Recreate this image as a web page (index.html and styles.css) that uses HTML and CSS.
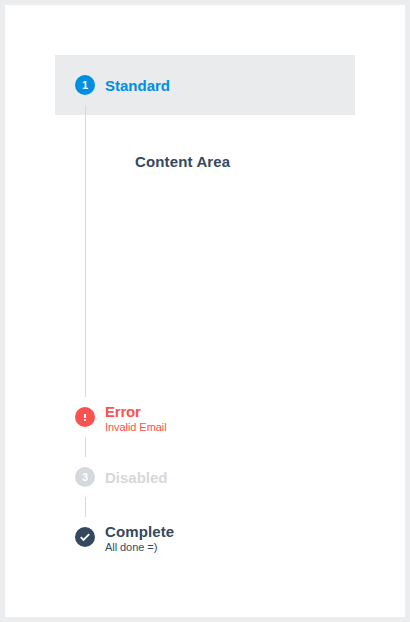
FILE: index.html
```html
<!DOCTYPE html>
<html lang="en">
<head>
<meta charset="utf-8">
<title>Stepper</title>
<link rel="stylesheet" href="styles.css">
</head>
<body>
<main class="stepper">
  <section class="step standard active">
    <header class="head"><div class="marker"><span class="badge"><span>1</span></span></div><h2>Standard</h2></header>
    <div class="body"><div class="content">Content Area</div></div>
  </section>
  <section class="step error">
    <header class="head"><div class="marker"><span class="badge"><svg width="20" height="20" viewBox="0 0 20 20"><path d="M9 7h2v4H9zM9 12h2v2H9z"/></svg></span></div><div><h2>Error</h2><p>Invalid Email</p></div></header>
  </section>
  <section class="step disabled">
    <header class="head"><div class="marker"><span class="badge"><span>3</span></span></div><h2>Disabled</h2></header>
  </section>
  <section class="step complete">
    <header class="head"><div class="marker"><span class="badge"><svg width="20" height="20" viewBox="0 0 20 20"><path class="check" d="M5.800 10.200l2.700 2.700 5.700-5.700"/></svg></span></div><div><h2>Complete</h2><p>All done =)</p></div></header>
  </section>
</main>
</body>
</html>
```

FILE: styles.css
```css
* { box-sizing: border-box; }
body {
  margin: 0;
  height: 622px;
  border: 5px solid #ecedef;
  background: #fff;
  font-family: "Liberation Sans", Arial, sans-serif;
  color: #34495e;
}
.stepper { width: 300px; margin: 50px; }
.head {
  display: flex;
  align-items: center;
  gap: 10px;
  height: 60px;
  padding: 0 20px;
}
.active .head { background: #e9ebed; }
.marker {
  display: flex;
  flex-direction: column;
  justify-content: space-between;
  width: 20px;
  height: 60px;
}
/* connector segments above and below each badge */
.marker::before,
.marker::after {
  content: "";
  width: 1px;
  height: 10px;
  margin-left: 10px;
  background: #d5d8dc;
}
.step:first-child .marker::before,
.step:last-child .marker::after { background: transparent; }
.badge {
  display: flex;
  align-items: center;
  justify-content: center;
  width: 20px;
  height: 20px;
  border-radius: 50%;
  background: currentColor;
  font-size: 11px;
  font-weight: bold;
}
.badge span { color: #fff; }
.badge svg { fill: #fff; }
.badge .check { fill: none; stroke: #fff; stroke-width: 1.8; }
h2 { margin: 0; padding-top: 2px; font-size: 15px; line-height: 18px; }
p { margin: 0; font-size: 11px; line-height: 13px; letter-spacing: -0.06px; }
.body { height: 272px; margin-left: 30px; border-left: 1px solid #d5d8dc; }
.content {
  padding: 38px 0 0 49px;
  font-size: 15px;
  line-height: 18px;
  font-weight: bold;
  letter-spacing: 0.14px;
  color: #34495e;
}
.standard { color: #008de4; }
.error { color: #fa524e; }
.error h2 { letter-spacing: -0.2px; }
.disabled { color: #d5d8dc; }
.complete h2 { letter-spacing: 0.12px; }
```
